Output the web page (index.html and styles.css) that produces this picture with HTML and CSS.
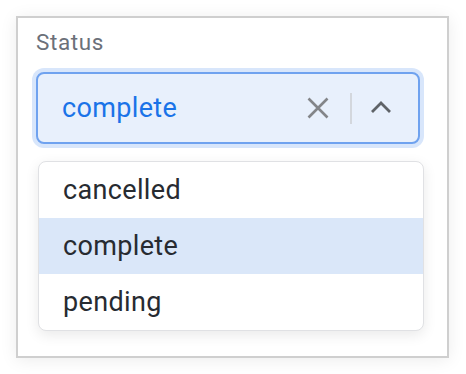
FILE: index.html
```html
<!DOCTYPE html>
<html>
<head>
<meta charset="utf-8">
<link rel="stylesheet" href="styles.css">
</head>
<body>
<div class="frame">
  <div class="label">Status</div>
  <div class="field">
    <span class="value">complete</span>
    <span class="clear">
      <svg width="22" height="22" viewBox="0 0 22 22"><path d="M1.5 1.5 L20.5 20.5 M20.5 1.5 L1.5 20.5" stroke="#838589" stroke-width="2.6" fill="none"/></svg>
    </span>
    <span class="sep"></span>
    <span class="chev">
      <svg width="22" height="14" viewBox="0 0 22 14"><path d="M2 12 L11 3 L20 12" stroke="#5f6368" stroke-width="2.8" fill="none"/></svg>
    </span>
  </div>
  <ul class="menu">
    <li class="item">cancelled</li>
    <li class="item active">complete</li>
    <li class="item">pending</li>
  </ul>
</div>
</body>
</html>
```

FILE: styles.css
```css
html, body {
  margin: 0;
  padding: 0;
  background: #ffffff;
}
body {
  font-family: Roboto, "Liberation Sans", sans-serif;
}
.frame {
  box-sizing: border-box;
  margin: 16px;
  width: 433px;
  height: 342px;
  border: 2px solid #cfcfcf;
  box-shadow: 0 2px 16px rgba(0, 0, 0, 0.08);
  background: #fff;
  padding: 12px 0 0 18px;
}
.label {
  font-size: 22.5px;
  letter-spacing: 0.6px;
  line-height: 25px;
  color: #6b7079;
}
.field {
  box-sizing: border-box;
  margin-top: 17px;
  width: 384px;
  height: 72px;
  border: 2px solid #6fa2ef;
  border-radius: 8px;
  background: #e8f0fc;
  box-shadow: 0 0 0 4px #d8e6fb;
  display: flex;
  align-items: center;
  padding: 0 26px 0 24px;
}
.value {
  flex: 1;
  font-size: 27px;
  letter-spacing: 0.35px;
  color: #1a73e8;
}
.clear {
  display: flex;
  width: 22px;
  height: 22px;
}
.sep {
  width: 2px;
  height: 31px;
  background: #d3d7dd;
  margin: 0 18px 0 21px;
}
.chev {
  display: flex;
  width: 22px;
  height: 14px;
  margin-top: -3px;
}
.menu {
  list-style: none;
  margin: 17px 0 0 2px;
  padding: 0;
  width: 386px;
  box-sizing: border-box;
  border: 1px solid #e0e1e4;
  border-radius: 8px;
  overflow: hidden;
  background: #fff;
  box-shadow: 0 4px 14px rgba(0, 0, 0, 0.09);
}
.item {
  height: 56px;
  display: flex;
  align-items: center;
  padding-left: 24px;
  font-size: 27px;
  letter-spacing: 0.35px;
  color: #272b31;
}
.item.active {
  background: #dae7f9;
}
```
